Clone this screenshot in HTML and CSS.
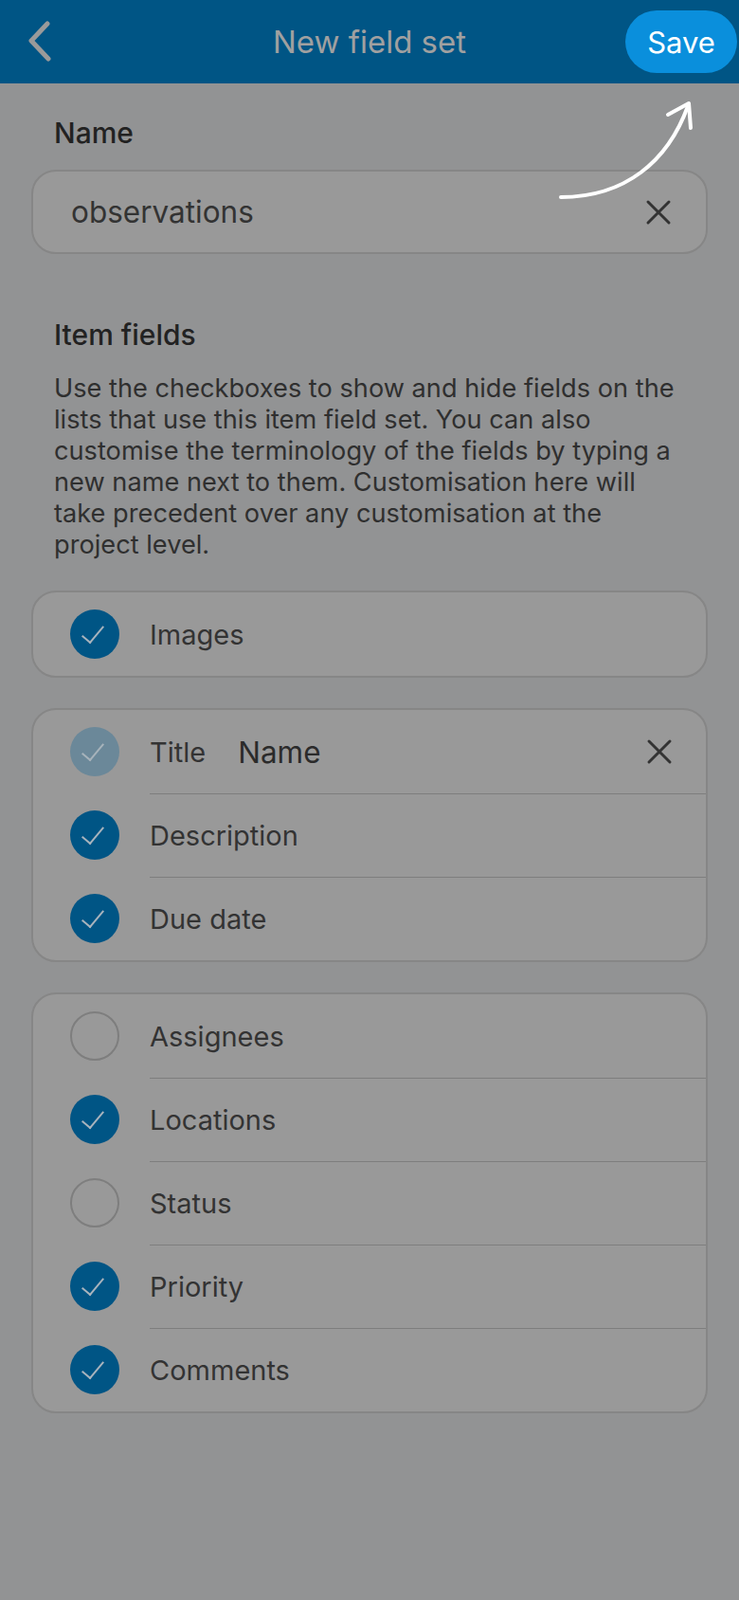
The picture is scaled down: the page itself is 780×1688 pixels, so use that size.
FILE: index.html
```html
<!DOCTYPE html>
<html>
<head>
  <title>New field set</title>
  <link rel="stylesheet" href="styles.css">
</head>
<body>
  <header class="topbar">
    <svg class="back" width="30" height="48" viewBox="0 0 30 48">
      <polyline points="20,4 3,22 21,41" fill="none" stroke="#9a9a9a" stroke-width="5" stroke-linecap="round" stroke-linejoin="round"/>
    </svg>
    <div class="topbar-title">New field set</div>
    <button class="save">Save</button>
  </header>

  <svg class="hint-arrow" width="780" height="260" viewBox="0 0 780 260">
    <path d="M592,208 C660,208 705,170 726,112" fill="none" stroke="#fff" stroke-width="4" stroke-linecap="round"/>
    <path d="M705,121 L727,109 L729,135" fill="none" stroke="#fff" stroke-width="4" stroke-linecap="round" stroke-linejoin="round"/>
  </svg>

  <main class="content">
    <div class="label">Name</div>
    <div class="text-input">
      <span>observations</span>
      <svg class="clear" width="28" height="28" viewBox="0 0 28 28">
        <path d="M3,3 L25,25 M25,3 L3,25" stroke="#333" stroke-width="3" stroke-linecap="round"/>
      </svg>
    </div>

    <div class="label section-label">Item fields</div>
    <p class="help">Use the checkboxes to show and hide fields on the lists that use this item field set. You can also customise the terminology of the fields by typing a new name next to them. Customisation here will take precedent over any customisation at the project level.</p>

    <div class="card">
      <div class="row">
        <span class="check on"></span>
        <div class="row-body">Images</div>
      </div>
    </div>

    <div class="card">
      <div class="row">
        <span class="check locked"></span>
        <div class="row-body">
          <span>Title</span>
          <span class="rename">Name</span>
          <svg class="clear" width="28" height="28" viewBox="0 0 28 28">
            <path d="M3,3 L25,25 M25,3 L3,25" stroke="#333" stroke-width="3" stroke-linecap="round"/>
          </svg>
        </div>
      </div>
      <div class="row">
        <span class="check on"></span>
        <div class="row-body">Description</div>
      </div>
      <div class="row">
        <span class="check on"></span>
        <div class="row-body">Due date</div>
      </div>
    </div>

    <div class="card">
      <div class="row">
        <span class="check"></span>
        <div class="row-body">Assignees</div>
      </div>
      <div class="row">
        <span class="check on"></span>
        <div class="row-body">Locations</div>
      </div>
      <div class="row">
        <span class="check"></span>
        <div class="row-body">Status</div>
      </div>
      <div class="row">
        <span class="check on"></span>
        <div class="row-body">Priority</div>
      </div>
      <div class="row">
        <span class="check on"></span>
        <div class="row-body">Comments</div>
      </div>
    </div>
  </main>
</body>
</html>
```

FILE: styles.css
```css
body {
  margin: 0;
  font-family: Inter, "Noto Sans", sans-serif;
  background-color: #929394;
  color: #2b2b2b;
  min-height: 1688px;
  position: relative;
}

.topbar {
  height: 88px;
  background-color: #005585;
  display: flex;
  align-items: center;
  position: relative;
}

.back {
  margin-left: 30px;
  margin-top: 2px;
}

.topbar-title {
  position: absolute;
  left: 0;
  right: 0;
  text-align: center;
  font-size: 33px;
  color: #a0a0a0;
  pointer-events: none;
}

.save {
  margin-left: auto;
  margin-right: 2px;
  height: 66px;
  width: 118px;
  border: none;
  border-radius: 33px;
  background-color: #0a8fdc;
  color: #fff;
  font-family: inherit;
  font-size: 31px;
  padding: 0;
}

.hint-arrow {
  position: absolute;
  top: 0;
  left: 0;
  z-index: 2;
}

.content {
  padding: 0 33px;
}

.label {
  margin: 35px 0 0 24px;
  font-size: 30px;
  font-weight: 500;
  line-height: 34px;
  color: #222;
}

.section-label {
  margin-top: 68px;
}

.text-input {
  margin-top: 22px;
  height: 89px;
  box-sizing: border-box;
  border: 2px solid #868686;
  border-radius: 26px;
  background-color: #999;
  display: flex;
  align-items: center;
  padding: 0 36px 0 40px;
  font-size: 31.5px;
  color: #333;
}

.clear {
  margin-left: auto;
}

.help {
  width: 665px;
  margin: 23px 0 32px 24px;
  font-size: 27.2px;
  line-height: 33px;
  color: #2f2f2f;
}

.card {
  border: 2px solid #868686;
  border-radius: 26px;
  background-color: #999;
  margin-bottom: 32px;
  overflow: hidden;
}

.row {
  display: flex;
  align-items: stretch;
}

.check {
  flex: none;
  width: 52px;
  height: 52px;
  box-sizing: border-box;
  border-radius: 50%;
  border: 2px solid #7e7e7e;
  margin: 18px 32px 18px 39px;
  position: relative;
}

.check.on,
.check.locked {
  border: none;
  background-color: #005585;
}

.check.locked {
  background-color: #6b8899;
}

.check.on::after,
.check.locked::after {
  content: "";
  position: absolute;
  left: 18px;
  top: 12px;
  width: 10px;
  height: 21px;
  border-right: 2px solid #a9b4bd;
  border-bottom: 2px solid #a9b4bd;
  transform: rotate(40deg);
}

.check.locked::after {
  border-color: #a7b3bb;
}

.row-body {
  flex: 1;
  display: flex;
  align-items: center;
  font-size: 29px;
  color: #333;
  padding-right: 35px;
}

.row + .row .row-body {
  border-top: 1px solid #7e7e7e;
}

.rename {
  margin-left: 34px;
  font-size: 31.5px;
  color: #2b2b2b;
}
```
